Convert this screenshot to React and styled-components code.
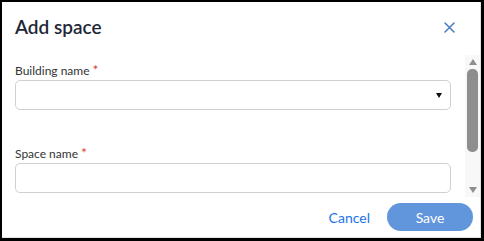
import styled, { createGlobalStyle } from "styled-components";

const GlobalStyle = createGlobalStyle`
  html, body {
    margin: 0;
    padding: 0;
    background: #000;
  }
  * {
    box-sizing: border-box;
  }
`;

const Dialog = styled.div`
  display: flex;
  flex-direction: column;
  height: 236px;
  margin: 2px 3px 3px 2px;
  background: #fff;
  font-family: Lato, "Noto Sans", sans-serif;
  box-shadow: inset -1px -1px 0 #e4e4e4;
`;

const Header = styled.div`
  display: flex;
  justify-content: space-between;
  align-items: flex-start;
  height: 53px;
  padding: 11px 24px 0 13px;
`;

const Title = styled.h2`
  margin: 0;
  font-size: 19px;
  line-height: 28px;
  font-weight: 600;
  color: #1e2836;
`;

const CloseButton = styled.button`
  display: flex;
  align-items: center;
  justify-content: center;
  width: 16px;
  height: 16px;
  margin-top: 6px;
  padding: 0;
  border: none;
  background: none;
  cursor: pointer;
`;

const Body = styled.div`
  display: flex;
  flex: 1;
  min-height: 0;
  margin-right: 1px;
`;

const Content = styled.div`
  flex: 1;
  overflow: hidden;
`;

const Scrollbar = styled.div`
  display: flex;
  flex-direction: column;
  align-items: center;
  width: 15px;
  padding: 3px 0;
  background: #f8f8f8;
`;

const Arrow = styled.span`
  width: 0;
  height: 0;
  margin: 1px 0;
  border-left: 4.5px solid transparent;
  border-right: 4.5px solid transparent;
  ${(p) => (p.$down ? "border-top: 6px solid #8e8e8e;" : "border-bottom: 6px solid #8e8e8e;")}
`;

const Track = styled.div`
  flex: 1;
  width: 100%;
  padding: 3px 2px;
`;

const Thumb = styled.div`
  height: 83px;
  border-radius: 5px;
  background: #8e8e8e;
`;

const Form = styled.div`
  display: flex;
  flex-direction: column;
  gap: 36px;
  padding: 8px 14px 56px 13px;
`;

const Field = styled.div`
  display: flex;
  flex-direction: column;
  gap: 1px;
`;

const Label = styled.label`
  font-size: 12px;
  line-height: 16px;
  color: #333;
`;

const Required = styled.span`
  color: #d9453a;
  font-size: 14px;
  line-height: 12px;
  margin-left: 3px;
`;

const Select = styled.div`
  position: relative;
  height: 30px;
  border: 1px solid #cfcfd4;
  border-radius: 5px;
  background: #fff;
`;

const Caret = styled.span`
  position: absolute;
  right: 8px;
  top: 12px;
  width: 0;
  height: 0;
  border-left: 3.5px solid transparent;
  border-right: 3.5px solid transparent;
  border-top: 5px solid #111;
`;

const Input = styled.input`
  height: 30px;
  border: 1px solid #cfcfd4;
  border-radius: 5px;
  background: #fff;
  font: inherit;
  padding: 0 8px;
  outline: none;
`;

const Footer = styled.div`
  display: flex;
  justify-content: flex-end;
  align-items: center;
  gap: 17px;
  height: 41px;
  padding: 0 8px 1px 0;
`;

const TextButton = styled.button`
  border: none;
  background: none;
  padding: 0;
  font-family: inherit;
  font-size: 14px;
  color: #1a73e8;
  cursor: pointer;
`;

const SaveButton = styled.button`
  width: 86px;
  height: 28px;
  border: none;
  border-radius: 14px;
  background: #6196dc;
  color: #fff;
  font-family: inherit;
  font-size: 14px;
  cursor: pointer;
`;

function CloseIcon() {
  return (
    <svg width="11" height="11" viewBox="0 0 11 11">
      <path d="M1 1L10 10M10 1L1 10" stroke="#4a7bc0" strokeWidth="1.5" strokeLinecap="round" />
    </svg>
  );
}

export default function App() {
  return (
    <>
      <GlobalStyle />
      <Dialog>
        <Header>
          <Title>Add space</Title>
          <CloseButton aria-label="Close">
            <CloseIcon />
          </CloseButton>
        </Header>
        <Body>
          <Content>
            <Form>
              <Field>
                <Label>
                  Building name<Required>*</Required>
                </Label>
                <Select>
                  <Caret />
                </Select>
              </Field>
              <Field>
                <Label>
                  Space name<Required>*</Required>
                </Label>
                <Input />
              </Field>
            </Form>
          </Content>
          <Scrollbar>
            <Arrow />
            <Track>
              <Thumb />
            </Track>
            <Arrow $down />
          </Scrollbar>
        </Body>
        <Footer>
          <TextButton>Cancel</TextButton>
          <SaveButton>Save</SaveButton>
        </Footer>
      </Dialog>
    </>
  );
}
